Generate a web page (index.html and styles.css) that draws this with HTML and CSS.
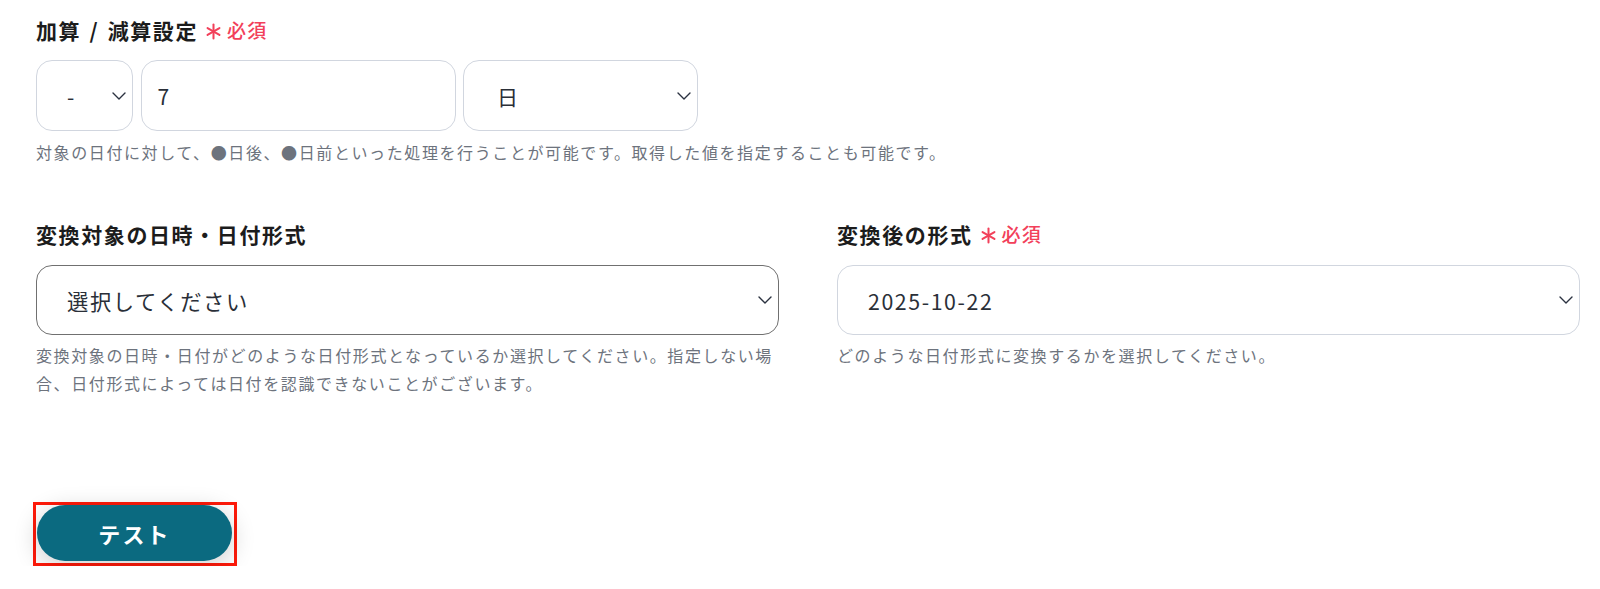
FILE: index.html
```html
<!DOCTYPE html>
<html lang="ja">
<head>
<meta charset="utf-8">
<title>日付変換設定</title>
<link rel="stylesheet" href="styles.css">
</head>
<body>
<main class="form">
  <section class="field">
    <div class="label"><span class="label-text spaced">加算 / 減算設定</span><span class="req"><svg class="ast" viewBox="0 0 16 16" width="17" height="17"><g stroke="currentColor" stroke-width="1.9" stroke-linecap="round"><line x1="8" y1="1.5" x2="8" y2="14.5"/><line x1="2.4" y1="4.75" x2="13.6" y2="11.25"/><line x1="2.4" y1="11.25" x2="13.6" y2="4.75"/></g></svg>必須</span></div>
    <div class="calc-row">
      <div class="box select sign"><span class="val">-</span><svg class="chev" viewBox="0 0 14 8" width="14" height="8"><path d="M1 1l6 6 6-6" fill="none" stroke="currentColor" stroke-width="1.4" stroke-linecap="round" stroke-linejoin="round"/></svg></div>
      <div class="box input num"><span class="val">7</span></div>
      <div class="box select unit"><span class="val">日</span><svg class="chev" viewBox="0 0 14 8" width="14" height="8"><path d="M1 1l6 6 6-6" fill="none" stroke="currentColor" stroke-width="1.4" stroke-linecap="round" stroke-linejoin="round"/></svg></div>
    </div>
    <p class="help">対象の日付に対して、●日後、●日前といった処理を行うことが可能です。取得した値を指定することも可能です。</p>
  </section>

  <div class="cols">
    <section class="field">
      <div class="label"><span class="label-text">変換対象の日時・日付形式</span></div>
      <div class="box select wide dark"><span class="val">選択してください</span><svg class="chev" viewBox="0 0 14 8" width="14" height="8"><path d="M1 1l6 6 6-6" fill="none" stroke="currentColor" stroke-width="1.4" stroke-linecap="round" stroke-linejoin="round"/></svg></div>
      <p class="help">変換対象の日時・日付がどのような日付形式となっているか選択してください。指定しない場合、日付形式によっては日付を認識できないことがございます。</p>
    </section>
    <section class="field">
      <div class="label"><span class="label-text">変換後の形式</span><span class="req"><svg class="ast" viewBox="0 0 16 16" width="17" height="17"><g stroke="currentColor" stroke-width="1.9" stroke-linecap="round"><line x1="8" y1="1.5" x2="8" y2="14.5"/><line x1="2.4" y1="4.75" x2="13.6" y2="11.25"/><line x1="2.4" y1="11.25" x2="13.6" y2="4.75"/></g></svg>必須</span></div>
      <div class="box select wide"><span class="val">2025-10-22</span><svg class="chev" viewBox="0 0 14 8" width="14" height="8"><path d="M1 1l6 6 6-6" fill="none" stroke="currentColor" stroke-width="1.4" stroke-linecap="round" stroke-linejoin="round"/></svg></div>
      <p class="help">どのような日付形式に変換するかを選択してください。</p>
    </section>
  </div>

  <div class="actions">
    <div class="highlight"><button class="btn-test" type="button">テスト</button></div>
  </div>
</main>
</body>
</html>
```

FILE: styles.css
```css
html, body {
  margin: 0;
  padding: 0;
  background: #ffffff;
}

body {
  font-family: "Noto Sans CJK JP", "Noto Sans", sans-serif;
  color: #1f1f1f;
  letter-spacing: 0.1em;
}

.form {
  padding: 16px 20px 0 36px;
}

.label {
  display: flex;
  align-items: center;
  font-size: 21px;
  line-height: 28px;
  font-weight: 700;
  color: #1c1c1c;
  margin-bottom: 16px;
}

.label-text {
  white-space: pre;
}

.spaced {
  word-spacing: 2px;
}

.req {
  display: inline-flex;
  align-items: center;
  margin-left: 7px;
  color: #f2405a;
  font-size: 19px;
  font-weight: 500;
  letter-spacing: 0.06em;
}

.ast {
  display: block;
  margin-right: 5px;
  margin-top: 2px;
}

.calc-row {
  display: flex;
  gap: 7.5px;
}

.box {
  box-sizing: border-box;
  display: flex;
  align-items: center;
  border: 1.5px solid #d1d6df;
  border-radius: 16px;
  background: #fff;
  font-size: 21px;
  color: #2a2f38;
}

.calc-row .box {
  height: 71px;
}

.sign {
  width: 97px;
  padding: 0 6px 0 30px;
}

.num {
  width: 315px;
  padding: 0 16px;
}

.unit {
  width: 235px;
  padding: 0 6px 0 33px;
}

.select .val {
  flex: 1;
}

.chev {
  display: block;
  color: #2b3240;
  flex: none;
}

.wide {
  height: 70px;
  padding: 0 6px 0 30px;
  font-size: 21.3px;
}

.dark {
  border-color: #707070;
}

.help {
  margin: 7px 0 0;
  font-size: 16px;
  line-height: 28px;
  color: #6d737d;
}

.cols {
  display: grid;
  grid-template-columns: 1fr 1fr;
  column-gap: 58px;
  margin-top: 54px;
}

.cols .label {
  margin-bottom: 17px;
}

.cols .help {
  margin-top: 6px;
}

.actions {
  margin-top: 105px;
  display: flex;
  margin-left: -3px;
}

.highlight {
  border: 3px solid #ff1a0a;
  padding: 0 2px 2px 1px;
}

.btn-test {
  display: block;
  width: 195px;
  height: 56px;
  border: none;
  border-radius: 28px;
  background: #0b6a80;
  color: #ffffff;
  font-family: "Noto Sans CJK JP", "Noto Sans", sans-serif;
  font-size: 22px;
  font-weight: 700;
  letter-spacing: 0.1em;
  box-shadow: 0 5px 24px rgba(0, 0, 0, 0.2);
  cursor: pointer;
}
```
